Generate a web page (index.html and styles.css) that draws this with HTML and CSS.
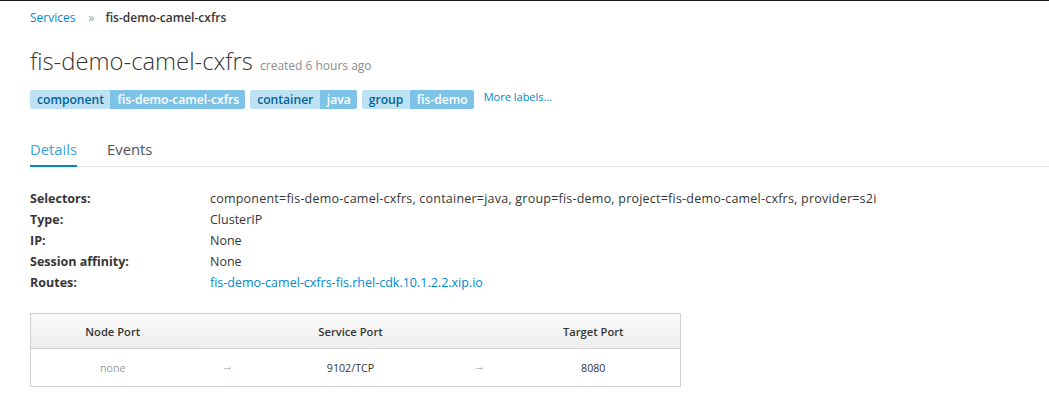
FILE: index.html
```html
<!DOCTYPE html>
<html>
<head>
<meta charset="utf-8">
<link rel="stylesheet" href="styles.css">
</head>
<body>
<div class="topline"></div>
<div class="page">
  <div class="breadcrumb">
    <a class="link" href="#">Services</a>
    <span class="sep">»</span>
    <span class="current">fis-demo-camel-cxfrs</span>
  </div>
  <h1 class="title">fis-demo-camel-cxfrs <small class="created">created 6 hours ago</small></h1>
  <div class="labels">
    <span class="label"><span class="key">component</span><span class="val">fis-demo-camel-cxfrs</span></span>
    <span class="label"><span class="key">container</span><span class="val">java</span></span>
    <span class="label"><span class="key">group</span><span class="val">fis-demo</span></span>
    <a class="more" href="#">More labels...</a>
  </div>
  <div class="tabs">
    <span class="tab active">Details</span>
    <span class="tab">Events</span>
  </div>
  <dl class="details">
    <dt>Selectors:</dt><dd class="selectors">component=fis-demo-camel-cxfrs, container=java, group=fis-demo, project=fis-demo-camel-cxfrs, provider=s2i</dd>
    <dt>Type:</dt><dd>ClusterIP</dd>
    <dt>IP:</dt><dd>None</dd>
    <dt>Session affinity:</dt><dd>None</dd>
    <dt>Routes:</dt><dd><a class="link" href="#">fis-demo-camel-cxfrs-fis.rhel-cdk.10.1.2.2.xip.io</a></dd>
  </dl>
  <table class="ports">
    <colgroup>
      <col class="c1"><col class="c2"><col class="c3"><col class="c4"><col class="c5">
    </colgroup>
    <thead>
      <tr><th>Node Port</th><th></th><th>Service Port</th><th></th><th class="last">Target Port</th></tr>
    </thead>
    <tbody>
      <tr><td class="muted">none</td><td class="arrow">→</td><td>9102/TCP</td><td class="arrow">→</td><td class="last">8080</td></tr>
    </tbody>
  </table>
</div>
</body>
</html>
```
FILE: styles.css
```css
html, body {
  margin: 0;
  padding: 0;
  background: #fff;
  font-family: "Open Sans", "Noto Sans", sans-serif;
  font-size: 12px;
  color: #363636;
}
.topline {
  height: 1px;
  background: #1a1a1a;
}
.page {
  padding: 0 30px;
}
.link {
  color: #0088ce;
  text-decoration: none;
}
.breadcrumb {
  margin-top: 7px;
  line-height: 20px;
  height: 20px;
  display: flex;
  align-items: center;
}
.breadcrumb .sep {
  color: #9c9c9c;
  margin: 0 11px 0 13px;
  font-size: 12px;
}
.breadcrumb .current {
  font-weight: 600;
  color: #363636;
}
.title {
  margin: 18px 0 0;
  font-size: 23.8px;
  font-weight: 300;
  line-height: 30px;
  color: #363636;
}
.created {
  font-size: 12px;
  font-weight: 400;
  color: #8b8d8f;
  margin-left: 1px;
}
.labels {
  display: flex;
  align-items: flex-start;
  margin-top: 9px;
  height: 19px;
}
.label {
  display: inline-flex;
  margin-right: 5px;
  border-radius: 2px;
  overflow: hidden;
  font-size: 12.1px;
  font-weight: 600;
  line-height: 19px;
}
.label .key {
  background: #bee1f4;
  color: #00659c;
  padding: 0 6.5px 0 7px;
}
.label .val {
  background: #7dc3e8;
  color: #fff;
  padding: 0 6px 0 7px;
}
.more {
  color: #0088ce;
  text-decoration: none;
  font-size: 11px;
  line-height: 14px;
  margin-left: 5px;
}
.tabs {
  margin-top: 30px;
  margin-right: -30px;
  display: flex;
  gap: 30px;
  border-bottom: 1px solid #e5e5e5;
}
.tab {
  font-size: 14.8px;
  line-height: 20px;
  padding-bottom: 6px;
  color: #4d5258;
  border-bottom: 2px solid transparent;
  margin-bottom: -1px;
}
.tab.active {
  color: #39a5dc;
  border-bottom-color: #0088ce;
}
.details {
  margin: 21px 0 0;
  display: grid;
  grid-template-columns: 180px 1fr;
  line-height: 21px;
  font-size: 12.5px;
}
.details dt {
  font-weight: 700;
  margin: 0;
}
.details dd {
  margin: 0;
}
.details .selectors {
  letter-spacing: 0.22px;
}
.ports {
  margin-top: 20px;
  width: 650px;
  border-collapse: collapse;
  border: 1px solid #d1d1d1;
  table-layout: fixed;
}
.c1 { width: 164px; }
.c2 { width: 66px; }
.c3 { width: 180px; }
.c4 { width: 78px; }
.c5 { width: 162px; }
.ports th {
  height: 34px;
  padding: 0;
  font-size: 11.2px;
  font-weight: 600;
  text-align: center;
  color: #363636;
  background: linear-gradient(#fafafa, #ededed);
  border-bottom: 1px solid #d1d1d1;
}
.ports td {
  height: 34px;
  padding: 0;
  text-align: center;
  font-size: 10.7px;
  color: #363636;
}
.ports .last {
  padding-right: 12px;
}
.ports .muted {
  color: #9c9c9c;
}
.ports .arrow {
  color: #8b8d8f;
  font-size: 11px;
  line-height: 12px;
  padding-bottom: 3px;
}
```
